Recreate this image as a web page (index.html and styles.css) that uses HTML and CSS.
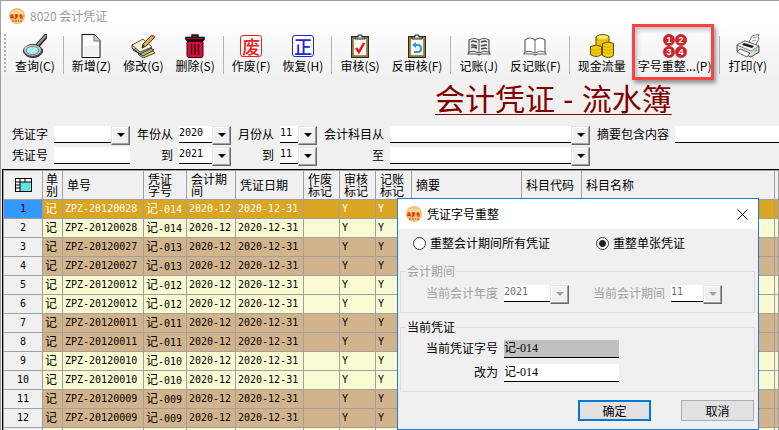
FILE: index.html
```html
<!DOCTYPE html>
<html lang="zh-CN">
<head>
    <title>8020 会计凭证</title>
    <meta charset="UTF-8">
    <link rel="stylesheet" href="styles.css">
</head>
<body>
    <svg class="defs" aria-hidden="true">
        <symbol id="logo" viewBox="0 0 16 16">
            <circle cx="8" cy="8" r="8" fill="#f3c36c"/>
            <path d="M2 4 Q8 0 14 4 L14 6 L2 6Z" fill="#f8d795"/>
            <path d="M1 8h4M3 6v4M1 10l2-1 2 1M6 7h3M7 6v4l-1 1M8 7v3M10 8h4M12 6v4M11 10h3" stroke="#e8261c" stroke-width="1.2" fill="none"/>
            <path d="M3 13h2M6 13h2M9 13h1M11 13h2" stroke="#8a6322" stroke-width="1"/>
        </symbol>
        <symbol id="clipboard" viewBox="0 0 24 24">
            <rect x="3.500" y="2.500" width="17" height="21" fill="#8e7a3e" stroke="#2e2810"/>
            <path d="M6 5h12v16H6z" fill="#fbfaf5" stroke="#d8d0b0" stroke-width=".5"/>
            <path d="M7 5V3h3V1h4v2h3v2z" fill="#bbb" stroke="#333" stroke-width="1"/>
            <path d="M11 2.500h2" stroke="#fff"/>
        </symbol>
    </svg>

    <div class="window">
        <div class="title-bar">
            <svg class="logo"><use href="#logo"/></svg>
            <span>8020 会计凭证</span>
        </div>

        <div class="toolbar">
            <span class="grip"></span>
            <button class="tool">
                <svg viewBox="0 0 24 24">
                    <path d="M15 11L23 2" stroke="#222" stroke-width="4.500" stroke-linecap="round"/>
                    <path d="M15 10.500L22.500 2" stroke="#999" stroke-width="2" stroke-linecap="round"/>
                    <ellipse cx="10" cy="17" rx="9.500" ry="6.500" fill="#555" stroke="#222"/>
                    <ellipse cx="9.500" cy="16.200" rx="8.500" ry="5.500" fill="#c5c5c5"/>
                    <ellipse cx="9.500" cy="16.500" rx="6.500" ry="4" fill="#8df0ee" stroke="#666" stroke-width=".7"/>
                    <path d="M5 17l3-3M8 19l5-5" stroke="#e4ffff" stroke-width="1.200"/>
                </svg>
                <span>查询(C)</span>
            </button>
            <span class="separator"></span>
            <button class="tool">
                <svg viewBox="0 0 24 24">
                    <path d="M3 .500h12.500l5.500 6v17H3z" fill="#fff" stroke="#111"/>
                    <path d="M5 12h14v10H5z" fill="#f0f0f0"/>
                    <path d="M15 1v6h6" fill="#ccc" stroke="#555" stroke-width=".8"/>
                </svg>
                <span>新增(Z)</span>
            </button>
            <button class="tool">
                <svg viewBox="0 0 24 24">
                    <path d="M7 20l11-6 6 5-12 5z" fill="#e8e232" stroke="#444"/>
                    <path d="M2 16l10-6 11 6-11 6z" fill="#b9b98f" stroke="#333"/>
                    <path d="M1 11l11-6 9 8-12 5z" fill="#f8f8cf" stroke="#555"/>
                    <path d="M1 14l8 6 12-6M1 11v3" fill="none" stroke="#333"/>
                    <path d="M11 14l1-4 9-9 3 2-9 9z" fill="#f0a848" stroke="#333"/>
                    <path d="M20 2l1-1 3 2-1 1z" fill="#e75757"/>
                    <path d="M11 14l1-3 2 1z" fill="#222"/>
                </svg>
                <span>修改(G)</span>
            </button>
            <button class="tool">
                <svg viewBox="0 0 24 24">
                    <path d="M9 3V1h6v2M3 6V3.500h18V6" fill="#d7103d" stroke="#111" stroke-width="1.500"/>
                    <path d="M3 6h18" stroke="#111" stroke-width="2"/>
                    <path d="M4 7.500h16v14q0 2-2 2H6q-2 0-2-2z" fill="#f0003c" stroke="#111"/>
                    <path d="M8.500 10v11M12 10v11M15.500 10v11" stroke="#111" stroke-width="1.500"/>
                </svg>
                <span>删除(S)</span>
            </button>
            <span class="separator"></span>
            <button class="tool">
                <span class="stamp red">废</span>
                <span>作废(F)</span>
            </button>
            <button class="tool">
                <span class="stamp blue">正</span>
                <span>恢复(H)</span>
            </button>
            <span class="separator"></span>
            <button class="tool">
                <svg viewBox="0 0 24 24">
                    <use href="#clipboard"/>
                    <path d="M8 14l3 4 5-9" fill="none" stroke="#e8102c" stroke-width="2.500"/>
                </svg>
                <span>审核(S)</span>
            </button>
            <button class="tool">
                <svg viewBox="0 0 24 24">
                    <use href="#clipboard"/>
                    <path d="M9 11h4q3 0 3 3.500T13 18H9" fill="none" stroke="#3398da" stroke-width="2"/>
                    <path d="M7 11l4-3v6z" fill="#3398da"/>
                </svg>
                <span>反审核(F)</span>
            </button>
            <span class="separator"></span>
            <button class="tool">
                <svg viewBox="0 0 24 24">
                    <path d="M2 6q5-3 10 0 5-3 10 0v12l1 2H14l-2 1-2-1H1l1-2z" fill="#ececec" stroke="#555" stroke-width="1.200"/>
                    <path d="M12 6v13M2 18q5-2 10 1 5-3 10-1" fill="none" stroke="#555"/>
                    <path d="M4 8l2-1 4 1M4 11h2l4 1M4 14l2-1 4 1M14 8l4-1 2 1M14 12l4-1h2M14 15l4-1 2 1" fill="none" stroke="#444" stroke-width="1.300"/>
                </svg>
                <span>记账(J)</span>
            </button>
            <button class="tool">
                <svg viewBox="0 0 24 24">
                    <path d="M2 6q5-4 10 0 5-4 10 0v12l1 2H14l-2 1-2-1H1l1-2z" fill="#fff" stroke="#666" stroke-width="1.200"/>
                    <path d="M12 6v13M2 18q5-2 10 1 5-3 10-1" fill="none" stroke="#666"/>
                </svg>
                <span>反记账(F)</span>
            </button>
            <span class="separator"></span>
            <button class="tool">
                <svg viewBox="0 0 24 24">
                    <path d="M6 2.500v14h13v-14q-6-4-13 0z" fill="#f2cb08" stroke="#4e4200"/>
                    <path d="M.500 12.500v8q6 4 11 0v-8q-5-3-11 0z" fill="#f2cb08" stroke="#5c4b00"/>
                    <path d="M12.500 9.500v12q6 4 11 0v-12q-5-3-11 0z" fill="#f2cb08" stroke="#5c4b00"/>
                    <ellipse cx="12.500" cy="3" rx="5.500" ry="1.800" fill="#ffec70"/>
                    <path d="M7 6q6 3 11 0M7 9q3 1 5 1M1 15q5 3 10 0M1 18q5 3 10 0M13 12q5 3 10 0M13 15q5 3 10 0M13 18q5 3 10 0" fill="none" stroke="#d0a800" stroke-width=".8"/>
                </svg>
                <span>现金流量</span>
            </button>
            <button class="tool marked">
                <svg viewBox="0 0 24 24">
                    <g fill="#d3222a" stroke="#a8141c" stroke-width=".5">
                        <circle cx="6" cy="6" r="5.700"/>
                        <circle cx="18" cy="6" r="5.700"/>
                        <circle cx="6" cy="18" r="5.700"/>
                        <circle cx="18" cy="18" r="5.700"/>
                    </g>
                    <g class="ball-number">
                        <text x="6" y="9">1</text>
                        <text x="18" y="9">2</text>
                        <text x="6" y="21">3</text>
                        <text x="18" y="21">4</text>
                    </g>
                </svg>
                <span>字号重整...(P)</span>
            </button>
            <span class="separator"></span>
            <button class="tool">
                <svg viewBox="0 0 24 24">
                    <path d="M13 8l3-6 7-2-1 3 1 2-4 7z" fill="#fff" stroke="#777"/>
                    <path d="M17 4l4-1M16 7l4-1" stroke="#999"/>
                    <path d="M1 11l8-4 14 5v6l-8 5-14-6z" fill="#dedede" stroke="#444"/>
                    <path d="M1 11l8-4 14 5-8 5z" fill="#f7f7f7" stroke="#666" stroke-width=".8"/>
                    <path d="M8 9l10 3-2 2-10-3z" fill="#111"/>
                    <path d="M1 18l3-3 10 4-3 4z" fill="#fff" stroke="#666"/>
                    <path d="M19 17l2-1" stroke="#4c4" stroke-width="1.500"/>
                </svg>
                <span>打印(Y)</span>
            </button>
        </div>

        <h1>会计凭证 - 流水簿</h1>

        <form class="filters">
            <label for="word">凭证字</label>
            <span class="combo"><select id="word"><option></option></select></span>
            <label for="yearFrom">年份从</label>
            <span class="combo"><select id="yearFrom"><option>2020</option></select></span>
            <label for="monthFrom">月份从</label>
            <span class="combo"><select id="monthFrom"><option>11</option></select></span>
            <label for="subjectFrom">会计科目从</label>
            <span class="combo"><select id="subjectFrom"><option></option></select></span>
            <label for="summary">摘要包含内容</label>
            <input type="text" id="summary">

            <label for="number">凭证号</label>
            <input type="text" id="number">
            <label for="yearTo">到</label>
            <span class="combo"><select id="yearTo"><option>2021</option></select></span>
            <label for="monthTo">到</label>
            <span class="combo"><select id="monthTo"><option>11</option></select></span>
            <label for="subjectTo">至</label>
            <span class="combo"><select id="subjectTo"><option></option></select></span>
        </form>

        <div class="grid">
            <table>
                <colgroup>
                    <col class="col-index"><col class="col-type"><col class="col-bill"><col class="col-word">
                    <col class="col-period"><col class="col-date"><col class="col-flag"><col class="col-flag">
                    <col class="col-flag"><col class="col-summary"><col class="col-code"><col class="col-name"><col>
                </colgroup>
                <thead>
                    <tr>
                        <th class="corner">
                            <svg viewBox="0 0 17 14">
                                <rect x=".500" y=".500" width="16" height="13" fill="#fff" stroke="#000"/>
                                <path d="M5 4h11v9H5z" fill="#5fe3e3"/>
                                <path d="M1 4h15M5 1v12M10 1v3M1 7h4M1 10h4" stroke="#000"/>
                            </svg>
                        </th>
                        <th>单别</th>
                        <th>单号</th>
                        <th>凭证字号</th>
                        <th>会计期间</th>
                        <th>凭证日期</th>
                        <th>作废标记</th>
                        <th>审核标记</th>
                        <th>记账标记</th>
                        <th>摘要</th>
                        <th>科目代码</th>
                        <th>科目名称</th>
                        <th></th>
                    </tr>
                </thead>
                <tbody id="vouchers"></tbody>
            </table>
        </div>
    </div>

    <div class="dialog" role="dialog" aria-labelledby="dialogTitle">
        <div class="dialog-title">
            <svg class="logo"><use href="#logo"/></svg>
            <span id="dialogTitle">凭证字号重整</span>
            <button class="close" aria-label="关闭">
                <svg viewBox="0 0 11 11"><path d="M.500 .500l10 10M10.500 .500l-10 10" stroke="#000"/></svg>
            </button>
        </div>
        <div class="choices">
            <label><input type="radio" name="scope">重整会计期间所有凭证</label>
            <label><input type="radio" name="scope" checked>重整单张凭证</label>
        </div>
        <fieldset class="period" disabled>
            <legend>会计期间</legend>
            <div class="period-row">
                <label for="curYear">当前会计年度</label>
                <span class="combo"><select id="curYear"><option>2021</option></select></span>
                <label for="curPeriod">当前会计期间</label>
                <span class="combo"><select id="curPeriod"><option>11</option></select></span>
            </div>
        </fieldset>
        <fieldset class="current">
            <legend>当前凭证</legend>
            <div class="current-rows">
                <label for="oldWord">当前凭证字号</label>
                <input type="text" id="oldWord" value="记-014" readonly>
                <label for="newWord">改为</label>
                <input type="text" id="newWord" value="记-014">
            </div>
        </fieldset>
        <div class="actions">
            <button class="default">确定</button>
            <button>取消</button>
        </div>
    </div>

    <script>
        // bill number suffix and voucher number; each voucher has two entries
        const vouchers = [
            ['28', '014'],
            ['27', '013'],
            ['12', '012'],
            ['11', '011'],
            ['10', '010'],
            ['09', '009']
        ];

        let html = '';
        vouchers.forEach(([bill, word], i) => {
            for (let entry = 1; entry <= 2; entry++) {
                const index = i * 2 + entry;
                const className = index === 1 ? 'selected' : (i % 2 ? 'odd' : 'even');
                html += `<tr class="${className}">
                    <th>${index}</th>
                    <td><b>记</b></td>
                    <td>ZPZ-201200${bill}</td>
                    <td><b>记</b>-${word}</td>
                    <td>2020-12</td>
                    <td>2020-12-31</td>
                    <td></td><td>Y</td><td>Y</td>
                    <td></td><td></td><td></td><td></td>
                </tr>`;
            }
        });
        // blank row at the end for new entries
        html += '<tr class="even"><th></th>' + '<td></td>'.repeat(12) + '</tr>';
        document.getElementById('vouchers').innerHTML = html;
    </script>
</body>
</html>
```
FILE: styles.css
```css
* {
    box-sizing: border-box;
}
body {
    margin: 0;
    height: 100vh;
    overflow: hidden;
    background: #f0f0f0;
    color: #000;
    font: 12px/16px "Noto Sans CJK SC", sans-serif;
}
button, input, select {
    font: inherit;
    color: inherit;
    margin: 0;
    padding: 0;
    border: 0;
    border-radius: 0;
}
.defs {
    position: absolute;
    width: 0;
    height: 0;
}
.window {
    height: 100vh;
    overflow: hidden;
    border-top: 1px solid #a0a0a0;
    border-left: 1px solid #a0a0a0;
    display: flex;
    flex-direction: column;
}
.logo {
    width: 16px;
    height: 16px;
    margin-right: 5px;
}
.title-bar {
    display: flex;
    align-items: center;
    flex: none;
    height: 30px;
    padding-left: 8px;
    background: #fff;
    color: #999;
}

/* toolbar */
.toolbar {
    display: flex;
    flex: none;
    height: 47px;
    padding: 3px 0 0 3px;
    background: linear-gradient(#fbfbfb, #f0f0f0);
}
.grip {
    width: 2px;
    height: 39px;
    margin-right: 3px;
    background: repeating-linear-gradient(#b0b0b0 0 2px, transparent 2px 4px);
}
.tool {
    display: flex;
    flex-direction: column;
    align-items: center;
    flex: none;
    height: 41px;
    padding: 0 6px;
    background: none;
    white-space: nowrap;
}
.tool svg {
    display: block;
    width: 24px;
    height: 24px;
    flex: none;
}
.separator {
    flex: none;
    width: 1px;
    height: 38px;
    margin: 2px 2px 0;
    background: #b4b4b4;
}
.stamp {
    width: 22px;
    height: 22px;
    margin: 1px 0;
    border: 1px solid;
    border-radius: 3px;
    font-size: 18px;
    line-height: 20px;
    font-weight: 500;
    background: #fff;
}
.stamp.red {
    color: #f02020;
}
.stamp.blue {
    color: #2424d8;
}
.ball-number {
    fill: #fff;
    font: bold 9px "Liberation Sans", sans-serif;
    text-anchor: middle;
}
.marked {
    position: relative;
}
.marked::after {
    content: "";
    position: absolute;
    inset: -10px 3px -5px 0;
    border: 3px solid #fa4343;
    box-shadow: 2px 3px 4px rgba(0,0,0,0.4), inset 2px 3px 4px rgba(0,0,0,0.25);
}
h1 {
    flex: none;
    margin: 0;
    padding: 4px 0 0 434px;
    height: 47px;
    color: #800000;
    font: 30px/36px "Liberation Sans", "Noto Sans CJK SC", sans-serif;
    text-decoration: underline 1px;
    text-underline-offset: 4px;
    white-space: nowrap;
}

/* filters */
.filters {
    display: grid;
    flex: none;
    grid-template-columns: 36px 76px 37px 52px 37px 37px 61px 200px 73px 1fr;
    grid-auto-rows: 17px;
    gap: 4px 6px;
    padding: 1px 0 5px 11px;
}
.filters label {
    text-align: right;
    white-space: nowrap;
}
input[type="text"], .combo {
    min-width: 0;
    width: 100%;
    height: 17px;
    background: #fff;
    border-bottom: 1px solid #000;
}
.combo {
    position: relative;
    display: block;
}
.combo select {
    appearance: none;
    display: block;
    width: 100%;
    height: 13px;
    background: none;
    font: 10px/13px "DejaVu Sans Mono", monospace;
}
.combo::before {
    content: "";
    position: absolute;
    top: 0;
    right: 0;
    width: 17px;
    height: 17px;
    background: #f0f0f0;
    border: 1px solid;
    border-color: #e3e3e3 #696969 #696969 #e3e3e3;
    box-shadow: inset -1px -1px #a0a0a0, inset 1px 1px #fff;
    pointer-events: none;
}
.combo::after {
    content: "";
    position: absolute;
    top: 7px;
    right: 5px;
    border: solid transparent;
    border-width: 4px 4px 0;
    border-top-color: #000;
    pointer-events: none;
}

/* voucher table */
.grid {
    flex: 1;
    overflow: hidden;
    margin-left: 1px;
    border: 1px solid #000;
    border-width: 1px 0 0 1px;
    box-shadow: inset 1px 1px #a0a0a0;
    padding: 1px 0 0 1px;
}
table {
    width: 100%;
    table-layout: fixed;
    border-collapse: separate;
    border-spacing: 0;
}
.col-index { width: 39px; }
.col-type { width: 20px; }
.col-bill { width: 81px; }
.col-word { width: 43px; }
.col-period { width: 49px; }
.col-date { width: 68px; }
.col-flag { width: 36px; }
.col-summary { width: 110px; }
.col-code { width: 60px; }
.col-name { width: 193px; }
th, td {
    padding: 0;
    border-right: 1px solid #a0a0a0;
    border-bottom: 1px solid #a0a0a0;
    font-weight: normal;
    text-align: left;
}
thead th {
    height: 29px;
    padding: 0 4px;
    line-height: 12px;
}
thead th:nth-child(2) {
    padding: 0 3px;
}
.corner svg {
    display: block;
    width: 17px;
    height: 14px;
    margin: 0 auto;
}
tbody td, tbody th {
    height: 19px;
    padding-left: 2px;
    font: 10px/16px "DejaVu Sans Mono", monospace;
    white-space: nowrap;
    overflow: hidden;
}
tbody th {
    padding: 0;
    text-align: center;
    background: #f0f0f0;
}
tbody b {
    font: 12px/14px "Noto Sans CJK SC", sans-serif;
}
.even {
    background: #fafad2;
}
.odd {
    background: #d2b48c;
}
.selected {
    background: #daa520;
    color: #fff;
}
.selected th {
    background: #3399ff;
    color: #000;
}

/* renumber dialog */
.dialog {
    position: absolute;
    left: 397px;
    top: 198px;
    width: 362px;
    background: #f0f0f0;
    border: 1px solid #1a7fd4;
}
.dialog-title {
    display: flex;
    align-items: center;
    height: 30px;
    padding: 0 10px 0 8px;
    background: #fff;
}
.close {
    width: 11px;
    height: 11px;
    margin-left: auto;
    background: none;
}
.close svg {
    display: block;
}
.choices {
    display: grid;
    grid-template-columns: 183px 1fr;
    height: 28px;
    margin-bottom: 8px;
    padding-left: 15px;
}
.choices label {
    display: flex;
    align-items: center;
    gap: 4px;
}
.choices input {
    appearance: none;
    width: 13px;
    height: 13px;
    border: 1px solid #333;
    border-radius: 50%;
    background: #fff;
}
.choices input:checked {
    background: radial-gradient(#222 0 3px, #fff 4px);
}
fieldset {
    min-width: 0;
    margin: 0 3px 8px 2px;
    border: 1px solid #dcdcdc;
}
legend {
    padding: 0 1px;
    line-height: 12px;
}
.period {
    padding: 8px 5px 10px;
    color: #a0a0a0;
}
.period-row {
    display: grid;
    grid-template-columns: 72px 65px 90px 51px;
    gap: 6px;
    padding-left: 20px;
}
.period-row label, .current-rows label {
    text-align: right;
}
.period select {
    color: #6d6d6d;
    opacity: 1;
}
.period .combo::after {
    border-top-color: #a0a0a0;
}
.current {
    padding: 7px 5px 9px;
}
.current-rows {
    display: grid;
    grid-template-columns: 72px 115px;
    grid-auto-rows: 18px;
    gap: 6px;
    padding-left: 20px;
}
.current-rows input[type="text"] {
    height: 18px;
    padding-bottom: 4px;
    font: 12px/13px "Liberation Serif", "Noto Sans CJK SC", serif;
}
.current-rows input[readonly] {
    background: #c0c0c0;
}
.actions {
    display: flex;
    justify-content: flex-end;
    gap: 30px;
    padding: 0 4px 8px 0;
}
.actions button {
    width: 73px;
    height: 21px;
    background: #e1e1e1;
    border: 1px solid #adadad;
}
.actions .default {
    border: 2px solid #0078d7;
}
```
